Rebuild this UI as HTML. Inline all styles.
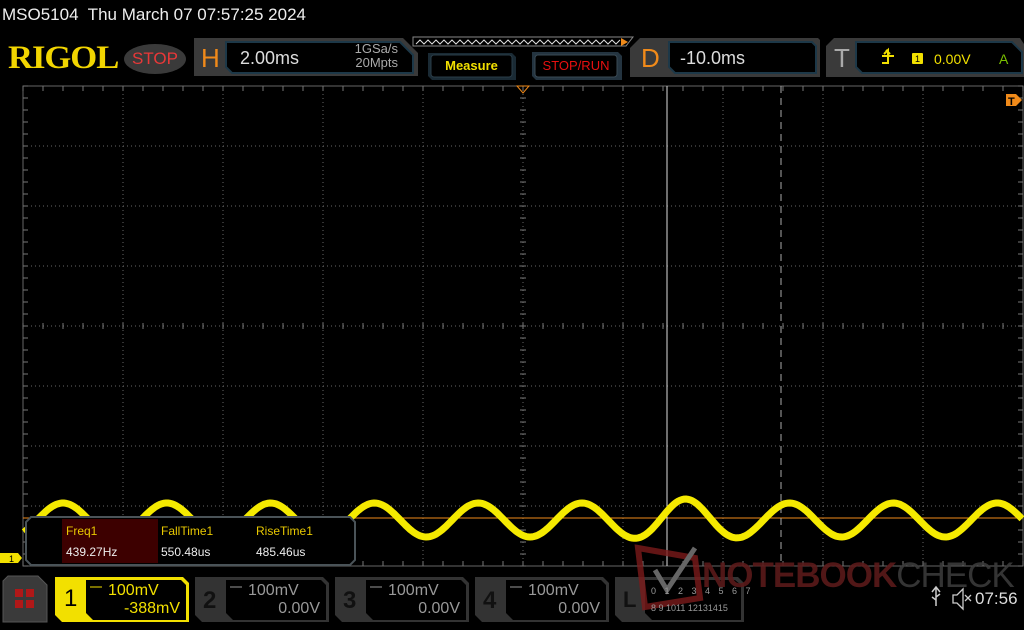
<!DOCTYPE html>
<html><head><meta charset="utf-8"><style>
*{margin:0;padding:0;box-sizing:border-box}
body{width:1024px;height:630px;background:#000;overflow:hidden;position:relative;font-family:"Liberation Sans",sans-serif}
.a{position:absolute}
</style></head><body>
<div class="a" style="left:2px;top:5px;color:#eee;font-size:17px">MSO5104&nbsp; Thu March 07 07:57:25 2024</div>
<div class="a" style="left:8px;top:40px;color:#f2d500;font-family:'Liberation Serif',serif;font-weight:bold;font-size:33px;letter-spacing:-1px;transform:scaleX(1.05);transform-origin:left">RIGOL</div>
<div class="a" style="left:124px;top:44px;width:62px;height:30px;border-radius:50%;background:#3a3a3a;color:#e83838;font-size:17px;text-align:center;line-height:30px">STOP</div>
<svg class="a" style="left:0;top:0" width="1024" height="630">
<path d="M194 38 H403 L418 53 V76 H194 Z" fill="#3a3a3a"/>
<path d="M226 42 H400 L413 55 V73 H232 L226 67 Z" fill="#000" stroke="#1d3848" stroke-width="2"/>
<path d="M413 37 H633 L626 46 H413 Z" fill="none" stroke="#888"/>
<polyline points="416,44 420,40 424,44 428,40 432,44 436,40 440,44 444,40 448,44 452,40 456,44 460,40 464,44 468,40 472,44 476,40 480,44 484,40 488,44 492,40 496,44 500,40 504,44 508,40 512,44 516,40 520,44 524,40 528,44 532,40 536,44 540,40 544,44 548,40 552,44 556,40 560,44 564,40 568,44 572,40 576,44 580,40 584,44 588,40 592,44 596,40 600,44 604,40 608,44 612,40 616,44 620,40" fill="none" stroke="#ddd" stroke-width="1"/>
<path d="M621 38 L628 42 L621 46 Z" fill="#f08a1a"/>
<path d="M428 53 H512 L516 57 V80 H432 L428 76 Z" fill="#1a2a34"/>
<rect x="431" y="55" width="81" height="22" rx="3" fill="#000" stroke="#2a3d48"/>
<path d="M532 52 H618 L622 56 V80 H536 L532 76 Z" fill="#243440"/>
<rect x="535" y="55" width="82" height="22" rx="3" fill="#000" stroke="#3a4a55"/>
<path d="M640 38 H818 L820 40 V77 H630 V48 Z" fill="#3a3a3a"/>
<path d="M669 42 H812 L816 46 V73 H675 L669 67 Z" fill="#000" stroke="#1d3848" stroke-width="2"/>
<path d="M834 38 H1020 L1024 44 V77 H826 V46 Z" fill="#3a3a3a"/>
<path d="M856 42 H1012 L1022 52 V73 H862 L856 67 Z" fill="#000" stroke="#1d3848" stroke-width="2"/>
<path d="M882 56 h6 v-6 l-4 4 M886 50 l4 4 M888 56 h6 M888 56 v7 h-6" fill="none" stroke="#f2e000" stroke-width="2"/>
<rect x="912" y="53" width="11" height="11" rx="1" fill="#f2e000"/>
<text x="917.5" y="62" font-size="9" text-anchor="middle" fill="#000" font-family="Liberation Sans">1</text>
<g id="grid"></g>
<line x1="23" y1="518" x2="1022" y2="518" stroke="#f08a1a" stroke-width="1"/>
<line x1="667" y1="86" x2="667" y2="566" stroke="#ddd" stroke-width="1"/>
<line x1="781" y1="86" x2="781" y2="566" stroke="#aaa" stroke-width="1" stroke-dasharray="7,5"/>
<path id="wave" fill="none" stroke="#f5ea00" stroke-width="7"/>
<path d="M517 86 L529 86 L523 93 Z" fill="none" stroke="#f08a1a"/>
<path d="M1006 94 H1016 L1022 100 L1016 106 H1006 Z" fill="#f08a1a"/>
<text x="1008" y="105" font-size="11" fill="#000" font-weight="bold" font-family="Liberation Sans">T</text>
<path d="M0 553 H18 L22 558 L18 563 H0 Z" fill="#f2e000"/>
<text x="9" y="562" font-size="9" fill="#000" font-family="Liberation Sans">1</text>
<path d="M31 517 H350 L355 522 V560 L350 565 H31 L26 560 V522 Z" fill="#000" stroke="#4a5358" stroke-width="2"/>
<rect x="62" y="519" width="96" height="44" fill="#3d0000"/>
<path d="M8 576 H38 L47 585 V622 H3 V581 Z" fill="#3a3a3a" stroke="#555"/>
<rect x="15" y="589" width="8" height="8" fill="#b01818"/><rect x="26" y="589" width="8" height="8" fill="#b01818"/><rect x="15" y="600" width="8" height="8" fill="#b01818"/><rect x="26" y="600" width="8" height="8" fill="#b01818"/>
<path d="M55 577 H183 L189 583 V622 H62 L55 615 Z" fill="#f2e000"/>
<path d="M86 580 H181 L186 585 V620 H93 L86 613 Z" fill="#000"/>
<path d="M195 577 H323 L329 583 V622 H202 L195 615 Z" fill="#333"/>
<path d="M226 580 H321 L326 585 V620 H233 L226 613 Z" fill="#000"/>
<path d="M335 577 H463 L469 583 V622 H342 L335 615 Z" fill="#333"/>
<path d="M366 580 H461 L466 585 V620 H373 L366 613 Z" fill="#000"/>
<path d="M475 577 H603 L609 583 V622 H482 L475 615 Z" fill="#333"/>
<path d="M506 580 H601 L606 585 V620 H513 L506 613 Z" fill="#000"/>
<path d="M615 577 H738 L744 583 V622 H622 L615 615 Z" fill="#333"/>
<path d="M645 580 H735 L741 585 V620 H652 L645 613 Z" fill="#000"/>
<g fill="none" stroke-width="1"><path d="M90 587 h12" stroke="#f2e000"/><path d="M230 587 h12" stroke="#999"/><path d="M370 587 h12" stroke="#999"/><path d="M510 587 h12" stroke="#999"/></g>
<path d="M936 588 v18 M932 592 l4 -5 l4 5 M936 600 l-4 -3 M936 597 l4 -3" fill="none" stroke="#ccc" stroke-width="1.5"/>
<path d="M953 595 h4 l6 -6 v20 l-6 -6 h-4 Z M965 595 l6 6 M971 595 l-6 6" fill="none" stroke="#ccc" stroke-width="1.3"/>
<path d="M638 548 L695 558 L700 598 L645 607 Z" fill="none" stroke="#7a1a1a" stroke-width="6" opacity=".8"/>
<path d="M655 570 L667 590 L695 548" fill="none" stroke="#666" stroke-width="5"/>
</svg>
<div class="a" style="left:201px;top:43px;color:#f08a1a;font-size:26px">H</div>
<div class="a" style="left:240px;top:48px;color:#ddd;font-size:18px">2.00ms</div>
<div class="a" style="left:343px;top:42px;color:#aaa;font-size:13px;line-height:14px;text-align:right;width:55px">1GSa/s<br>20Mpts</div>
<div class="a" style="left:431px;top:58px;width:81px;text-align:center;color:#f2e000;font-weight:bold;font-size:13px">Measure</div>
<div class="a" style="left:535px;top:58px;width:82px;text-align:center;color:#e81010;font-size:13px">STOP/RUN</div>
<div class="a" style="left:641px;top:43px;color:#f08a1a;font-size:26px">D</div>
<div class="a" style="left:680px;top:48px;color:#ddd;font-size:18px">-10.0ms</div>
<div class="a" style="left:834px;top:43px;color:#aaa;font-size:26px">T</div>
<div class="a" style="left:934px;top:51px;color:#f2e000;font-size:14px">0.00V</div>
<div class="a" style="left:999px;top:51px;color:#7ac000;font-size:14px">A</div>
<div class="a" style="left:66px;top:524px;color:#e8c800;font-size:12px">Freq1</div>
<div class="a" style="left:66px;top:545px;color:#eee;font-size:12px">439.27Hz</div>
<div class="a" style="left:161px;top:524px;color:#e8c800;font-size:12px">FallTime1</div>
<div class="a" style="left:161px;top:545px;color:#eee;font-size:12px">550.48us</div>
<div class="a" style="left:256px;top:524px;color:#e8c800;font-size:12px">RiseTime1</div>
<div class="a" style="left:256px;top:545px;color:#eee;font-size:12px">485.46us</div>
<div class="a" style="left:64px;top:585px;color:#000;font-size:24px">1</div>
<div class="a" style="left:108px;top:582px;color:#f2e000;font-size:16px">100mV</div>
<div class="a" style="left:100px;top:600px;width:80px;text-align:right;color:#f2e000;font-size:16px">-388mV</div>
<div class="a" style="left:203px;top:587px;color:#111;font-size:24px;font-weight:bold">2</div>
<div class="a" style="left:248px;top:582px;color:#999;font-size:16px">100mV</div>
<div class="a" style="left:240px;top:600px;width:80px;text-align:right;color:#999;font-size:16px">0.00V</div>
<div class="a" style="left:343px;top:587px;color:#111;font-size:24px;font-weight:bold">3</div>
<div class="a" style="left:388px;top:582px;color:#999;font-size:16px">100mV</div>
<div class="a" style="left:380px;top:600px;width:80px;text-align:right;color:#999;font-size:16px">0.00V</div>
<div class="a" style="left:483px;top:587px;color:#111;font-size:24px;font-weight:bold">4</div>
<div class="a" style="left:528px;top:582px;color:#999;font-size:16px">100mV</div>
<div class="a" style="left:520px;top:600px;width:80px;text-align:right;color:#999;font-size:16px">0.00V</div>
<div class="a" style="left:623px;top:587px;color:#111;font-size:22px;font-weight:bold">L</div>
<div class="a" style="left:651px;top:586px;color:#999;font-size:9px;letter-spacing:3px">0 1 2 3 4 5 6 7</div>
<div class="a" style="left:651px;top:603px;color:#999;font-size:9px">8 9 1011 12131415</div>
<div class="a" style="left:702px;top:556px;color:#5a1a1a;font-size:35px;font-weight:bold;opacity:.9;letter-spacing:-1px">NOTEBOOK<span style="color:#3a3a3a;font-weight:normal">CHECK</span></div>
<div class="a" style="left:975px;top:589px;color:#ddd;font-size:17px">07:56</div>
<script>
var g='';
g+='<rect x="23" y="86" width="1000" height="480" fill="none" stroke="#666"/>';
for(var i=1;i<10;i++){var x=23+i*100;g+='<line x1="'+x+'" y1="86" x2="'+x+'" y2="566" stroke="#666" stroke-dasharray="1,3"/>';}
for(var j=1;j<8;j++){var y=86+j*60;g+='<line x1="23" y1="'+y+'" x2="1023" y2="'+y+'" stroke="#666" stroke-dasharray="1,3"/>';}
for(var x=23;x<=1023;x+=20){g+='<line x1="'+x+'" y1="86" x2="'+x+'" y2="91" stroke="#777"/><line x1="'+x+'" y1="561" x2="'+x+'" y2="566" stroke="#777"/><line x1="'+x+'" y1="323" x2="'+x+'" y2="329" stroke="#777"/>';}
for(var y=86;y<=566;y+=12){g+='<line x1="23" y1="'+y+'" x2="28" y2="'+y+'" stroke="#777"/><line x1="1018" y1="'+y+'" x2="1023" y2="'+y+'" stroke="#777"/><line x1="520" y1="'+y+'" x2="526" y2="'+y+'" stroke="#777"/>';}
document.getElementById('grid').innerHTML=g;
var d='';
for(var x=24;x<=1022;x+=2){var a=17+4*Math.exp(-Math.pow((x-682)/45,2));var y=520-a*Math.cos(2*Math.PI*(x-63)/103.8);d+=(x==24?'M':'L')+x+' '+y.toFixed(1);}
document.getElementById('wave').setAttribute('d',d);
</script>
</body></html>
